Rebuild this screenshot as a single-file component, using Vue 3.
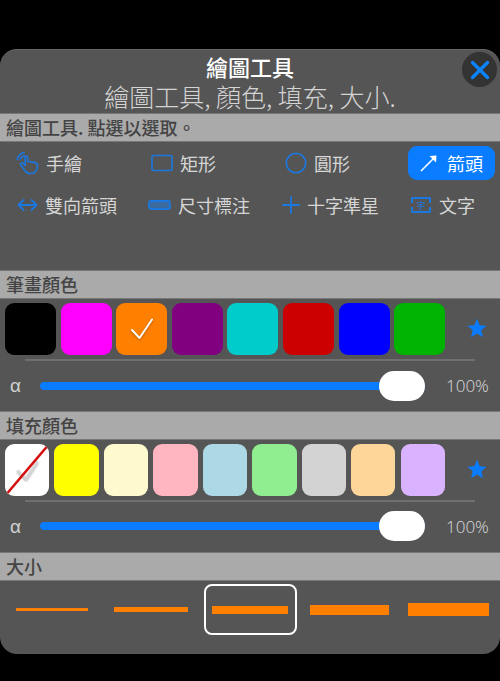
<script setup>
const strokeColors = ['#000000', '#ff00ff', '#ff8000', '#800080', '#00cccc', '#cc0000', '#0000ff', '#00b300']
const fillColors = ['#ffffff', '#ffff00', '#fffacd', '#ffb6c1', '#add8e6', '#90ee90', '#d3d3d3', '#ffd699', '#d9b3ff']
const sizes = [3, 5, 8, 10, 13]
const lineWidths = [72, 74, 76, 79, 81]
</script>

<template>
  <div class="panel">
    <header class="head">
      <div class="title">繪圖工具</div>
      <div class="subtitle">繪圖工具, 顏色, 填充, 大小.</div>
      <button class="close" aria-label="close">
        <svg width="22" height="22" viewBox="0 0 22 22"><path d="M3.5 3.5 L18.5 18.5 M18.5 3.5 L3.5 18.5" stroke="#0a84ff" stroke-width="3.2" stroke-linecap="round" fill="none" /></svg>
      </button>
    </header>

    <div class="band">繪圖工具. 點選以選取。</div>
    <section class="tools">
      <div class="tool-row row-a">
        <div class="tool hand">
          <svg class="ic" width="24" height="24" viewBox="0 0 24 24" fill="none" stroke="#1a78e0" stroke-width="1.6" stroke-linecap="round" stroke-linejoin="round">
            <path d="M8 1.5 C4.5 2.5 2 5 1.2 8.5" />
            <path d="M8.5 4.5 C6.5 5.2 5 6.5 4.2 8.5" />
            <path d="M9 8 L9 6.6 C9 5 11.6 5 11.6 6.6 L11.8 10.5 L18 11.4 C20.5 11.8 21.8 13 21.5 15.5 L20.8 18 C20 21.5 18 22.5 14.5 22.5 C11.5 22.5 10 21.5 8.5 19 L4.8 14 C4 12.5 5.7 11 7 12.2 L9.3 14.5 Z" />
          </svg>
          <span>手繪</span>
        </div>
        <div class="tool">
          <svg class="ic" width="22" height="18" viewBox="0 0 22 18"><rect x="1" y="1.5" width="20" height="15" rx="1.5" fill="none" stroke="#1a78e0" stroke-width="1.6" /></svg>
          <span>矩形</span>
        </div>
        <div class="tool">
          <svg class="ic" width="22" height="22" viewBox="0 0 22 22"><circle cx="11" cy="11" r="9.7" fill="none" stroke="#1a78e0" stroke-width="1.6" /></svg>
          <span>圓形</span>
        </div>
        <div class="tool selected">
          <svg class="ic" width="17" height="17" viewBox="0 0 17 17" fill="none" stroke="#fff" stroke-width="1.6"><path d="M1 16 L13.5 3.5" /><path d="M9.5 1 L16.5 0.5 L16 7.5 Z" fill="#fff" stroke="none" /></svg>
          <span>箭頭</span>
        </div>
      </div>
      <div class="tool-row row-b">
        <div class="tool">
          <svg class="ic" width="21" height="14" viewBox="0 0 21 14" fill="none" stroke="#1a78e0" stroke-width="1.8" stroke-linecap="round" stroke-linejoin="round"><path d="M1.5 7 L19.5 7 M6.5 2 L1.5 7 L6.5 12 M14.5 2 L19.5 7 L14.5 12" /></svg>
          <span>雙向箭頭</span>
        </div>
        <div class="tool">
          <svg class="ic" width="23" height="10" viewBox="0 0 23 10"><rect x="1" y="1" width="21" height="8" rx="2" fill="#3b6a9e" stroke="#1a78e0" stroke-width="1.8" /></svg>
          <span>尺寸標注</span>
        </div>
        <div class="tool">
          <svg class="ic" width="18" height="18" viewBox="0 0 18 18"><path d="M9 1 V17 M1 9 H17" stroke="#1a78e0" stroke-width="1.8" stroke-linecap="round" /></svg>
          <span>十字準星</span>
        </div>
        <div class="tool">
          <div class="text-ic"><span>字</span></div>
          <span>文字</span>
        </div>
      </div>
    </section>

    <div class="band">筆畫顏色</div>
    <section class="colors">
      <div class="swatches stroke">
        <div v-for="(c, i) in strokeColors" :key="c" class="swatch" :style="{ background: c }">
          <svg v-if="i === 2" width="24" height="24" viewBox="0 0 24 24" class="check"><path d="M2 13 L9.5 21 L22 2.5" fill="none" stroke="#fff" stroke-width="2" stroke-linecap="round" stroke-linejoin="round" /></svg>
        </div>
        <svg class="star" width="20" height="20" viewBox="0 0 24 24"><path d="M12 1 L15.2 8.6 L23.5 9.3 L17.2 14.8 L19.1 23 L12 18.6 L4.9 23 L6.8 14.8 L0.5 9.3 L8.8 8.6 Z" fill="#0a7cff" /></svg>
      </div>
      <div class="divider"></div>
      <div class="slider-row">
        <span class="alpha">α</span>
        <div class="slider"><div class="track"></div><div class="thumb"></div></div>
        <span class="pct">100%</span>
      </div>
    </section>

    <div class="band">填充顏色</div>
    <section class="colors fill-section">
      <div class="swatches fill">
        <div v-for="(c, i) in fillColors" :key="c" class="swatch" :style="{ background: c }">
          <svg v-if="i === 0" class="none-ic" width="44" height="52" viewBox="0 0 44 52">
            <path d="M13 27 L21 35 L32 18" fill="none" stroke="#d8d8d8" stroke-width="2.4" stroke-linecap="round" stroke-linejoin="round" class="check" />
            <path d="M2.5 49 L42 2.5" stroke="#d40f0f" stroke-width="2.6" />
          </svg>
        </div>
        <svg class="star" width="20" height="20" viewBox="0 0 24 24"><path d="M12 1 L15.2 8.6 L23.5 9.3 L17.2 14.8 L19.1 23 L12 18.6 L4.9 23 L6.8 14.8 L0.5 9.3 L8.8 8.6 Z" fill="#0a7cff" /></svg>
      </div>
      <div class="divider"></div>
      <div class="slider-row">
        <span class="alpha">α</span>
        <div class="slider"><div class="track"></div><div class="thumb"></div></div>
        <span class="pct">100%</span>
      </div>
    </section>

    <div class="band">大小</div>
    <section class="sizes">
      <div v-for="(s, i) in sizes" :key="s" class="size" :class="{ active: i === 2 }">
        <div class="line" :style="{ height: s + 'px', width: lineWidths[i] + 'px' }"></div>
      </div>
    </section>
  </div>
</template>

<style>
html, body { margin: 0; background: #000; }
</style>

<style scoped>
.panel {
  margin-top: 49px;
  width: 500px;
  height: 605px;
  background: #555;
  border-radius: 17px;
  box-sizing: border-box;
  border-top: 1px solid #666;
  overflow: hidden;
  font-family: "Noto Sans CJK TC", "Noto Sans", sans-serif;
  color: #d6d6d6;
}
.head {
  position: relative;
  height: 63px;
  text-align: center;
}
.title {
  padding-top: 2px;
  color: #fff;
  font-size: 22px;
  font-weight: 500;
  line-height: 29px;
}
.subtitle {
  margin-top: 1px;
  font-size: 25px;
  line-height: 29px;
  color: #d4d4d4;
  font-weight: 300;
}
.close {
  position: absolute;
  top: 2px;
  right: 3px;
  width: 35px;
  height: 35px;
  padding: 0;
  border: 0;
  border-radius: 50%;
  background: #333;
  display: flex;
  align-items: center;
  justify-content: center;
}
.band {
  height: 27px;
  box-sizing: content-box;
  border-top: 1px solid #777;
  background: #aaa;
  color: #444;
  padding-left: 6px;
  font-size: 18px;
  font-weight: 500;
  line-height: 27px;
  box-shadow: 0 1px 0 #777;
}
.tools {
  height: 129px;
  box-sizing: border-box;
  padding-top: 5px;
}
.tool-row {
  display: grid;
  align-items: center;
  font-size: 18px;
}
.row-a {
  height: 34px;
  padding-left: 16px;
  grid-template-columns: 135px 134px 123px 87px;
}
.row-b {
  height: 34px;
  margin-top: 8px;
  padding-left: 17px;
  grid-template-columns: 131px 134px 129px auto;
}
.tool {
  display: flex;
  align-items: center;
  gap: 7px;
  white-space: nowrap;
}
.hand { gap: 6px; }
.ic { flex: none; }
.selected {
  height: 34px;
  box-sizing: border-box;
  justify-content: center;
  gap: 10px;
  background: #0a7cff;
  border-radius: 9px;
  color: #fff;
}
.text-ic {
  width: 20px;
  height: 16px;
  box-sizing: border-box;
  border-top: 2px solid #1a78e0;
  border-bottom: 2px solid #1a78e0;
  border-left: 2px dashed #1a78e0;
  border-right: 2px dashed #1a78e0;
  border-radius: 2px;
  display: flex;
  align-items: center;
  justify-content: center;
  color: #1a78e0;
  font-size: 9px;
  line-height: 1;
  margin-right: 1px;
}
.colors {
  height: 113px;
  box-sizing: border-box;
  padding-top: 5px;
}
.swatches {
  height: 52px;
  padding-left: 5px;
  display: flex;
  align-items: center;
  position: relative;
}
.swatches.stroke { gap: 4.6px; }
.swatches.fill { gap: 5.05px; }
.swatch {
  height: 52px;
  border-radius: 9px;
  display: flex;
  align-items: center;
  justify-content: center;
  flex: none;
  overflow: hidden;
}
.stroke .swatch { width: 51px; }
.fill .swatch { width: 44.4px; }
.check { filter: drop-shadow(0 1px 1px rgba(0, 0, 0, 0.35)); }
.star {
  position: absolute;
  right: 13px;
  top: 15px;
}
.divider {
  height: 2px;
  margin: 4px 25px 0;
  background: #707070;
}
.slider-row {
  height: 49px;
  display: flex;
  align-items: center;
  padding-left: 10px;
}
.fill-section .slider-row { height: 48px; }
.alpha {
  width: 30px;
  font-size: 19px;
  line-height: 1;
  font-family: "Liberation Sans", sans-serif;
  color: #d0d0d0;
}
.slider {
  position: relative;
  width: 385px;
  height: 30px;
  display: flex;
  align-items: center;
}
.track {
  width: 100%;
  height: 8px;
  border-radius: 4px;
  background: #0a7cff;
}
.thumb {
  position: absolute;
  right: 0;
  top: 0;
  width: 46px;
  height: 30px;
  border-radius: 15px;
  background: #fff;
}
.pct {
  margin-left: 21px;
  font-size: 17px;
  font-family: "Open Sans", "Liberation Sans", sans-serif;
  color: #dcdcdc;
  font-weight: 300;
}
.sizes {
  padding: 4px 5.5px 0;
  display: grid;
  grid-template-columns: repeat(5, 93px);
  column-gap: 6px;
}
.size {
  height: 51px;
  box-sizing: border-box;
  border: 2px solid transparent;
  border-radius: 8px;
  display: flex;
  align-items: center;
  justify-content: center;
}
.size.active { border-color: #fff; }
.line { background: #ff8000; flex: none; }
</style>
